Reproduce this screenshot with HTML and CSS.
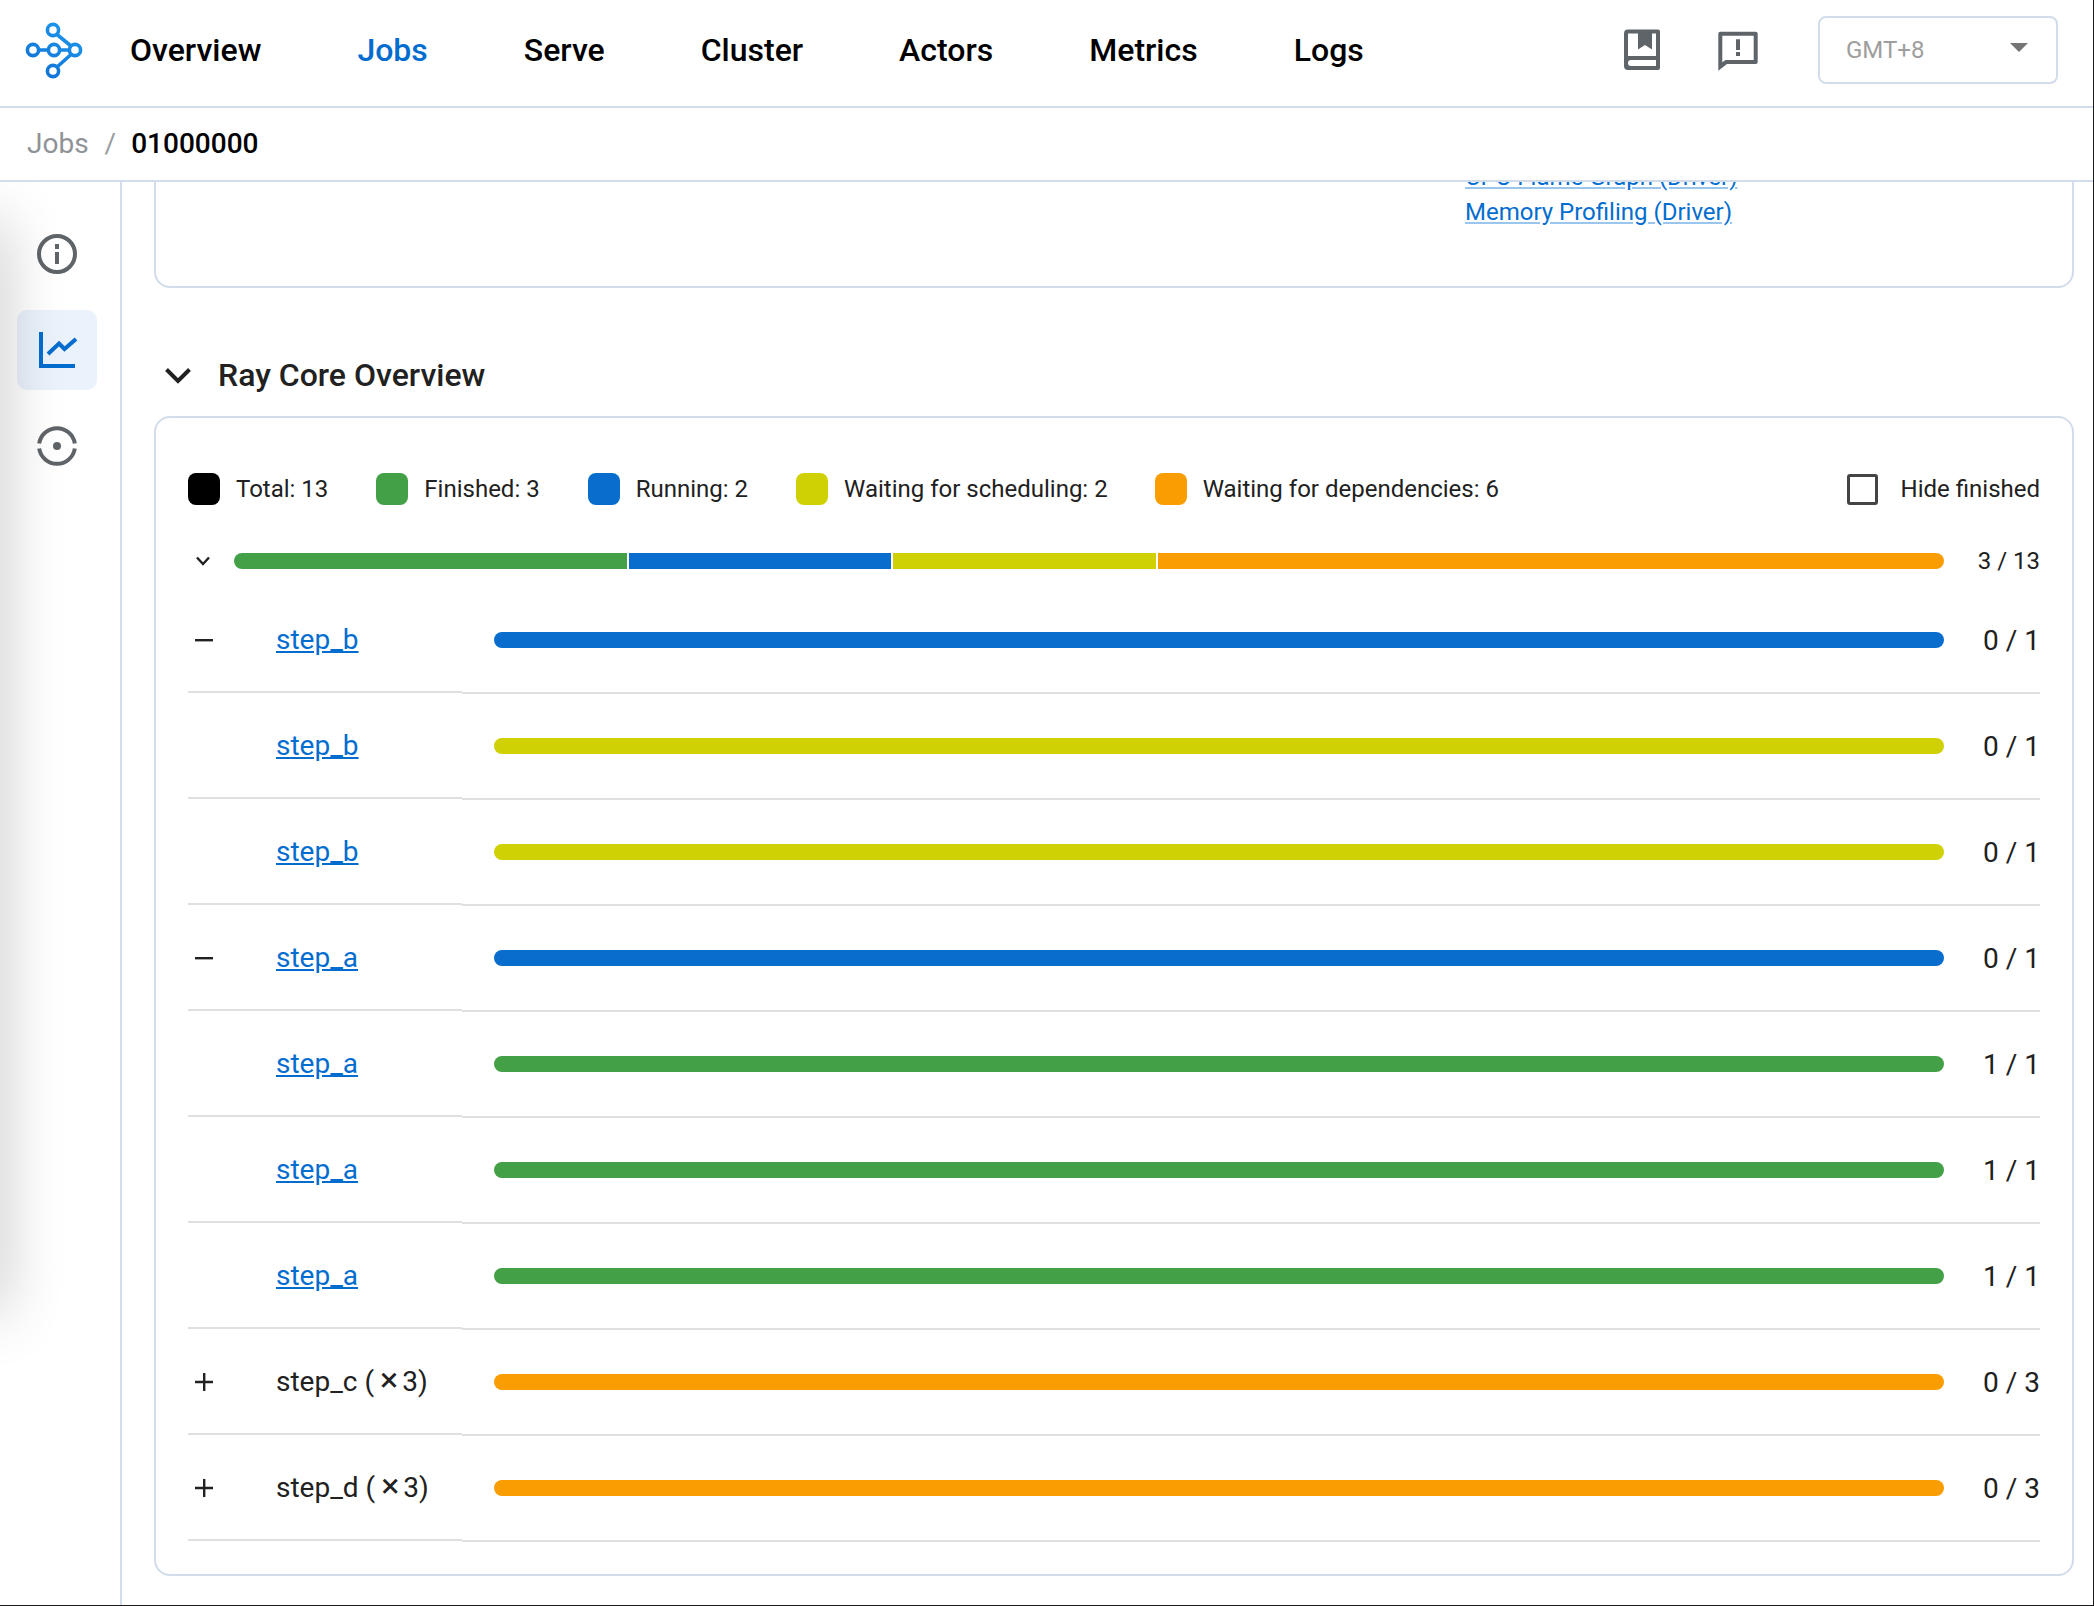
FILE: index.html
```html
<!DOCTYPE html>
<html lang="en">
<head>
<meta charset="utf-8">
<title>Ray Dashboard</title>
<link rel="stylesheet" href="styles.css">
</head>
<body>
<div class="app">
  <header class="topnav">
    <svg class="logo" viewBox="0 0 70 70" width="70" height="70" fill="none">
      <defs><linearGradient id="lg" gradientUnits="userSpaceOnUse" x1="50" y1="8" x2="15" y2="62"><stop offset="0" stop-color="#1e98ee"/><stop offset="1" stop-color="#0f6fd2"/></linearGradient></defs>
      <g stroke="url(#lg)" stroke-width="3.6">
        <circle cx="33" cy="15" r="5.6"/><circle cx="13" cy="35" r="5.6"/><circle cx="34" cy="35" r="5.6"/><circle cx="55" cy="35" r="5.6"/><circle cx="33" cy="56" r="5.6"/>
        <path d="M19 35h9M40 35h9M37 19.500l14 11.500M37 52l14-12.500"/>
      </g>
    </svg>
    <nav class="menu">
      <a class="menu-item">Overview</a>
      <a class="menu-item menu-item-active">Jobs</a>
      <a class="menu-item">Serve</a>
      <a class="menu-item">Cluster</a>
      <a class="menu-item">Actors</a>
      <a class="menu-item">Metrics</a>
      <a class="menu-item">Logs</a>
    </nav>
    <div class="nav-right">
      <svg class="nav-icon" viewBox="0 0 48 48" width="48" height="48"><path fill-rule="evenodd" d="M10 3.500h30a2 2 0 0 1 2 2V42a2 2 0 0 1-2 2H10a4 4 0 0 1-4-4V7.500a4 4 0 0 1 4-4zM10 7.500V30h28V7.500h-4v16l-7-4.500-7 4.500v-16zM13 34a3 3 0 0 0 0 6h25v-6z"/></svg>
      <svg class="nav-icon" viewBox="0 0 48 48" width="48" height="48"><path fill-rule="evenodd" d="M6.300 3.700h35.400a2 2 0 0 1 2 2V34a2 2 0 0 1-2 2H13l-8.700 6.700V5.700a2 2 0 0 1 2-2zM8.300 7.700v26.500l3.300-2.300h28.100V7.700zM22 11.300h4V22h-4zM22 24h4v4h-4z"/></svg>
      <div class="tz-select">
        <span class="tz-value">GMT+8</span>
        <span class="tz-arrow"></span>
      </div>
    </div>
  </header>
  <div class="crumbs">
    <a class="crumb-link">Jobs</a>
    <span class="crumb-sep">/</span>
    <span class="crumb-current">01000000</span>
  </div>
  <div class="page">
    <aside class="sidebar">
      <div class="side-item">
        <svg class="side-icon" viewBox="0 0 48 48" width="48" height="48"><circle cx="24" cy="24" r="18" fill="none" stroke-width="4"/><path class="solid" d="M22 14h4v5h-4zM22 22h4v12h-4z"/></svg>
      </div>
      <div class="side-item side-item-active">
        <svg viewBox="0 0 48 48" width="48" height="48" fill="none" stroke="#036dcf" stroke-width="4"><path d="M8 6V40H42"/><path d="M15 28l11-10.500 5.500 5.500L43 13"/></svg>
      </div>
      <div class="side-item">
        <svg class="side-icon" viewBox="0 0 48 48" width="48" height="48"><path fill="none" stroke-width="4" d="M6.200 21.500A18 18 0 0 1 41.800 21.500M6.200 26.500A18 18 0 0 0 41.800 26.500"/><circle class="solid" cx="24" cy="24" r="4"/></svg>
      </div>
    </aside>
    <main class="content">
      <section class="card card-info">
        <div class="profile-links">
          <a class="link link-soft">CPU Flame Graph (Driver)</a>
          <a class="link link-soft">Memory Profiling (Driver)</a>
        </div>
      </section>
      <div class="section-head">
        <svg class="title-chevron" viewBox="0 0 26 16" width="26" height="16" fill="none"><path d="M1.500 1.500L13 13 24.500 1.500"/></svg>
        <h2 class="section-title">Ray Core Overview</h2>
      </div>
      <section class="card card-core">
        <div class="legend">
          <div class="legend-item"><span class="swatch c-black"></span>Total: 13</div>
          <div class="legend-item"><span class="swatch c-green"></span>Finished: 3</div>
          <div class="legend-item"><span class="swatch c-blue"></span>Running: 2</div>
          <div class="legend-item"><span class="swatch c-yellow"></span>Waiting for scheduling: 2</div>
          <div class="legend-item legend-item-last"><span class="swatch c-orange"></span>Waiting for dependencies: 6</div>
          <label class="hide-finished"><span class="checkbox"></span>Hide finished</label>
        </div>
        <div class="total-row">
          <span class="total-toggle"><svg viewBox="0 0 14 10" width="14" height="10" fill="none"><path d="M1 1.500L7 8l6-6.500"/></svg></span>
          <div class="bar bar-split">
            <span class="seg c-green seg-3"></span><span class="seg c-blue seg-2"></span><span class="seg c-yellow seg-2"></span><span class="seg c-orange seg-6"></span>
          </div>
          <span class="count count-small">3 / 13</span>
        </div>
        <div class="row">
          <div class="row-left"><span class="toggle"><svg viewBox="0 0 20 20" width="20" height="20"><path d="M1 9h18v2.400H1z"/></svg></span><a class="link">step_b</a></div>
          <div class="row-right"><div class="bar c-blue"></div><span class="count">0 / 1</span></div>
        </div>
        <div class="row">
          <div class="row-left"><span class="toggle"></span><a class="link">step_b</a></div>
          <div class="row-right"><div class="bar c-yellow"></div><span class="count">0 / 1</span></div>
        </div>
        <div class="row">
          <div class="row-left"><span class="toggle"></span><a class="link">step_b</a></div>
          <div class="row-right"><div class="bar c-yellow"></div><span class="count">0 / 1</span></div>
        </div>
        <div class="row">
          <div class="row-left"><span class="toggle"><svg viewBox="0 0 20 20" width="20" height="20"><path d="M1 9h18v2.400H1z"/></svg></span><a class="link">step_a</a></div>
          <div class="row-right"><div class="bar c-blue"></div><span class="count">0 / 1</span></div>
        </div>
        <div class="row">
          <div class="row-left"><span class="toggle"></span><a class="link">step_a</a></div>
          <div class="row-right"><div class="bar c-green"></div><span class="count">1 / 1</span></div>
        </div>
        <div class="row">
          <div class="row-left"><span class="toggle"></span><a class="link">step_a</a></div>
          <div class="row-right"><div class="bar c-green"></div><span class="count">1 / 1</span></div>
        </div>
        <div class="row">
          <div class="row-left"><span class="toggle"></span><a class="link">step_a</a></div>
          <div class="row-right"><div class="bar c-green"></div><span class="count">1 / 1</span></div>
        </div>
        <div class="row">
          <div class="row-left"><span class="toggle"><svg viewBox="0 0 20 20" width="20" height="20"><path d="M1 8.800h8V1h2.400v7.800H19v2.400h-7.600V19H9v-7.800H1z"/></svg></span><span class="name">step_c (<span class="times">×</span>3)</span></div>
          <div class="row-right"><div class="bar c-orange"></div><span class="count">0 / 3</span></div>
        </div>
        <div class="row">
          <div class="row-left"><span class="toggle"><svg viewBox="0 0 20 20" width="20" height="20"><path d="M1 8.800h8V1h2.400v7.800H19v2.400h-7.600V19H9v-7.800H1z"/></svg></span><span class="name">step_d (<span class="times">×</span>3)</span></div>
          <div class="row-right"><div class="bar c-orange"></div><span class="count">0 / 3</span></div>
        </div>
      </section>
    </main>
  </div>
</div>
</body>
</html>
```
FILE: styles.css
```css
* { box-sizing: border-box; }
html, body { margin: 0; padding: 0; }
body {
  width: 2094px;
  height: 1606px;
  background: #1c1c1c;
  font-family: Roboto, "Liberation Sans", sans-serif;
  color: #212121;
  overflow: hidden;
}
.app {
  width: 2093px;
  height: 1605px;
  background: #fff;
  display: flex;
  flex-direction: column;
  overflow: hidden;
}
.topnav {
  height: 108px;
  flex: none;
  display: flex;
  align-items: center;
  padding-bottom: 6px;
  border-bottom: 2px solid #d2dcea;
  background: #fff;
  position: relative;
  z-index: 2;
}
.logo { margin: 0 40px 0 20px; flex: none; }
.menu { display: flex; gap: 96px; }
.menu-item { font-size: 32px; font-weight: 500; color: #000; }
.menu-item-active { color: #036dcf; }
.nav-right {
  margin-left: auto;
  display: flex;
  align-items: center;
  padding-right: 35px;
}
.nav-icon { fill: #5f6469; display: block; }
.nav-icon + .nav-icon { margin: 4px 0 0 48px; }
.tz-select {
  margin-left: 56px;
  width: 240px;
  height: 68px;
  border: 2px solid #d2dcea;
  border-radius: 8px;
  display: flex;
  align-items: center;
  padding: 0 28px 0 26px;
  justify-content: space-between;
}
.tz-value { font-size: 24px; color: #9e9e9e; }
.tz-arrow {
  width: 0;
  height: 0;
  border-left: 9px solid transparent;
  border-right: 9px solid transparent;
  border-top: 9px solid #757575;
  margin-bottom: 6px;
}
.crumbs {
  height: 74px;
  flex: none;
  display: flex;
  align-items: center;
  padding: 0 0 2px 27px;
  border-bottom: 2px solid #d2dcea;
  background: #fff;
  position: relative;
  z-index: 2;
  font-size: 28px;
}
.crumb-link { color: #8f9296; }
.crumb-sep { color: #9a9da1; margin: 0 15px 0 16px; }
.crumb-current { color: #000; font-weight: 500; }
.page { flex: 1; min-height: 0; display: flex; }
.sidebar {
  width: 122px;
  flex: none;
  border-right: 2px solid #d2dcea;
  display: flex;
  flex-direction: column;
  gap: 16px;
  padding: 32px 0 0 17px;
  position: relative;
  overflow: hidden;
}
.sidebar::before {
  content: "";
  position: absolute;
  left: -30px;
  top: 40px;
  width: 30px;
  height: 1090px;
  box-shadow: 0 0 60px 0 rgba(0, 0, 0, 0.3);
  pointer-events: none;
  z-index: 1;
}
.side-item {
  width: 80px;
  height: 80px;
  border-radius: 10px;
  display: flex;
  align-items: center;
  justify-content: center;
}
.side-item-active { background: #eaf2fb; }
.side-icon { stroke: #5f6469; }
.side-icon .solid { fill: #5f6469; stroke: none; }
.content {
  flex: 1;
  min-width: 0;
  display: flex;
  flex-direction: column;
  justify-content: flex-end;
  overflow: hidden;
  padding: 0 19px 29px 32px;
}
.card {
  border: 2px solid #d2dcea;
  border-radius: 16px;
  flex: none;
  background: #fff;
}
.card-info { padding: 0 0 56px 1309px; }
.profile-links { display: flex; flex-direction: column; font-size: 24px; line-height: 35px; }
.link { color: #036dcf; text-decoration: underline; }
.link-soft { text-decoration-color: rgba(3, 109, 207, 0.4); }
.section-head {
  flex: none;
  margin-top: 46px;
  height: 82px;
  display: flex;
  align-items: center;
  padding-left: 11px;
}
.title-chevron { stroke: #212121; stroke-width: 4; margin: 2px 27px 0 0; flex: none; }
.section-title { margin: 0; font-size: 32px; font-weight: 500; color: #212121; }
.card-core { padding: 55px 32px 32px; }
.legend {
  display: flex;
  gap: 48px;
  height: 32px;
  align-items: center;
  font-size: 24px;
  margin-bottom: 29px;
}
.legend-item { display: flex; align-items: center; gap: 16px; }
.legend-item-last { margin-left: -1px; }
.swatch { width: 32px; height: 32px; border-radius: 8px; display: block; }
.hide-finished { margin-left: auto; display: flex; align-items: center; gap: 23px; }
.checkbox { width: 31px; height: 31px; border: 3.5px solid #444; border-radius: 3px; display: block; }
.c-black { background: #000; }
.c-green { background: #43a047; }
.c-blue { background: #096dcd; }
.c-yellow { background: #cfd104; }
.c-orange { background: #f99d03; }
.total-row { display: flex; align-items: center; height: 54px; }
.total-toggle { width: 46px; flex: none; padding-left: 8px; display: flex; }
.total-toggle svg { stroke: #212121; stroke-width: 2.4; }
.bar { flex: 1; height: 16px; border-radius: 8px; }
.bar-split { display: flex; gap: 2px; overflow: hidden; }
.seg { display: block; height: 100%; }
.seg-3 { flex: 3; }
.seg-2 { flex: 2; }
.seg-6 { flex: 6; }
.count { width: 96px; flex: none; text-align: right; font-size: 28px; }
.count-small { font-size: 24px; }
.row { display: flex; align-items: flex-start; height: 106px; }
.row-left {
  width: 274px;
  flex: none;
  height: 105px;
  border-bottom: 2px solid #e0e0e0;
  display: flex;
  align-items: center;
  font-size: 28px;
}
.toggle { width: 88px; flex: none; padding-left: 6px; display: flex; }
.toggle svg { fill: #212121; }
.name { white-space: nowrap; }
.times { font-size: 34px; line-height: 0; margin: 0 4px 0 6px; }
.row-right {
  flex: 1;
  min-width: 0;
  height: 106px;
  border-bottom: 2px solid #e0e0e0;
  display: flex;
  align-items: center;
  padding-left: 32px;
}
```
